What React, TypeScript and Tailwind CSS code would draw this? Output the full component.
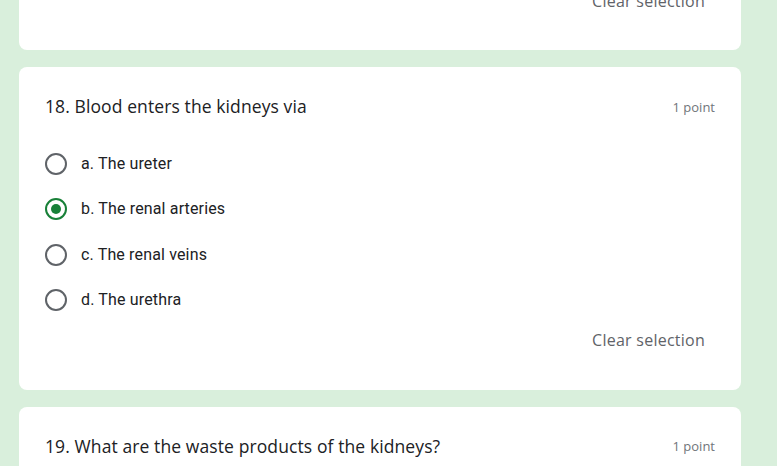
const OPTIONS = [
  { id: "a", label: "a. The ureter" },
  { id: "b", label: "b. The renal arteries" },
  { id: "c", label: "c. The renal veins" },
  { id: "d", label: "d. The urethra" },
]

const titleFont = { fontFamily: "'Open Sans', 'Noto Sans', sans-serif" }
const bodyFont = { fontFamily: "Roboto, 'Noto Sans', sans-serif" }

function Radio({ checked }: { checked: boolean }) {
  return (
    <span
      className={`flex h-[22px] w-[22px] shrink-0 items-center justify-center rounded-full border-2 ${
        checked ? "border-[#188038]" : "border-[#5f6368]"
      }`}
    >
      {checked && <span className="h-[10px] w-[10px] rounded-full bg-[#188038]" />}
    </span>
  )
}

function ClearSelection() {
  return (
    <div className="flex justify-end">
      <button
        className="mr-[2px] flex h-9 items-center px-2 text-[16px] font-medium tracking-[0.25px] text-[#5f6368]"
        style={titleFont}
      >
        Clear selection
      </button>
    </div>
  )
}

function QuestionHeader({ title }: { title: string }) {
  return (
    <div className="flex items-center justify-between">
      <h2 className="text-[17.5px] leading-6 tracking-[0.1px] text-[#202124]" style={titleFont}>
        {title}
      </h2>
      <span className="mt-[3px] text-[13px] text-[#70757a]" style={titleFont}>
        1 point
      </span>
    </div>
  )
}

export default function App() {
  const selected = "b"

  return (
    <div className="h-[466px] w-[777px] overflow-hidden bg-[#d9efdc]">
      <div className="-mt-[17px] flex w-[722px] flex-col gap-[17px] pl-[19px] box-content">
        <div className="rounded-b-lg bg-white px-[26px] pb-[31px]">
          <ClearSelection />
        </div>

        <div className="rounded-lg bg-white px-[26px] pt-[27px] pb-[32px]">
          <QuestionHeader title="18. Blood enters the kidneys via" />
          <div className="mt-[23.5px] flex flex-col">
            {OPTIONS.map((opt) => (
              <label key={opt.id} className="flex h-[45.3px] items-center gap-[14px]">
                <Radio checked={opt.id === selected} />
                <span className="text-[16px] tracking-[0.15px] text-[#202124]" style={bodyFont}>
                  {opt.label}
                </span>
              </label>
            ))}
          </div>
          <div className="-mt-[1px]">
            <ClearSelection />
          </div>
        </div>

        <div className="rounded-lg bg-white px-[26px] pt-[27px] pb-[32px]">
          <QuestionHeader title="19. What are the waste products of the kidneys?" />
        </div>
      </div>
    </div>
  )
}
